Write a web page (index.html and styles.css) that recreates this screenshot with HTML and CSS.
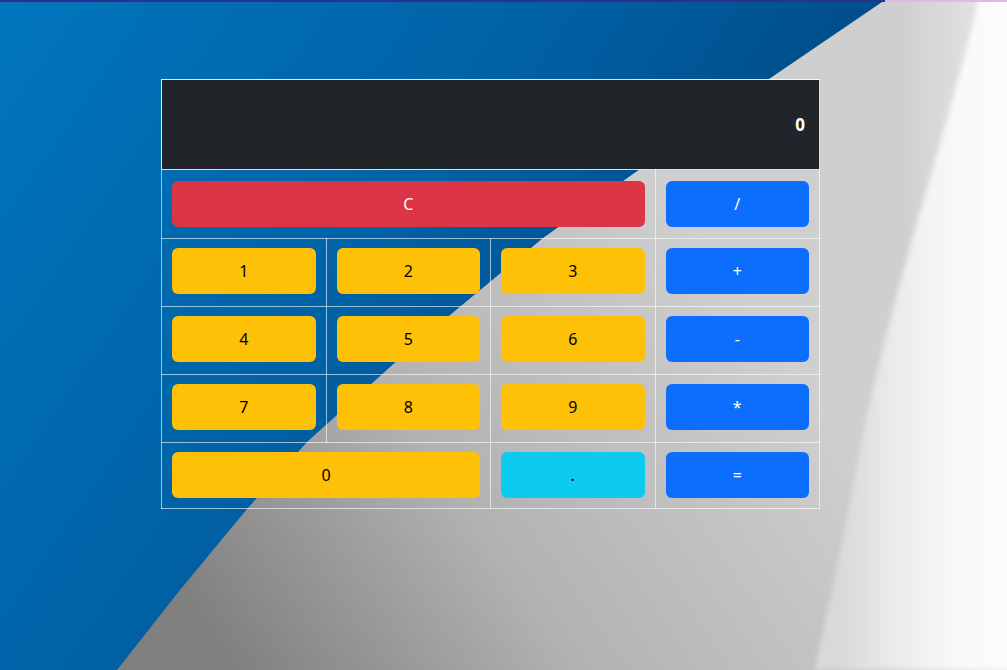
FILE: index.html
```html
<!DOCTYPE html>
<html lang="en">
<head>
<meta charset="utf-8">
<title>Calculator</title>
<link rel="stylesheet" href="styles.css">
</head>
<body>
<svg class="backdrop" viewBox="0 0 1007 670" preserveAspectRatio="none" aria-hidden="true">
  <defs>
    <linearGradient id="grayGrad" gradientUnits="userSpaceOnUse" x1="200" y1="620" x2="720" y2="260">
      <stop offset="0" stop-color="#808080"/>
      <stop offset="0.45" stop-color="#b2b2b2"/>
      <stop offset="1" stop-color="#cfcfcf"/>
    </linearGradient>
    <linearGradient id="blueGrad" gradientUnits="userSpaceOnUse" x1="0" y1="0" x2="620" y2="420">
      <stop offset="0" stop-color="#0076bd"/>
      <stop offset="0.6" stop-color="#0062a6"/>
      <stop offset="1" stop-color="#004c88"/>
    </linearGradient>
    <linearGradient id="whiteGrad" gradientUnits="userSpaceOnUse" x1="840" y1="0" x2="960" y2="0">
      <stop offset="0" stop-color="#d9d9d9"/>
      <stop offset="0.5" stop-color="#ececec"/>
      <stop offset="1" stop-color="#f7f7f7"/>
    </linearGradient>
    <linearGradient id="whiteRight" gradientUnits="userSpaceOnUse" x1="900" y1="0" x2="1007" y2="0">
      <stop offset="0" stop-color="#ffffff" stop-opacity="0"/>
      <stop offset="1" stop-color="#ffffff" stop-opacity="0.9"/>
    </linearGradient>
    <filter id="soft" x="-20%" y="-20%" width="140%" height="140%">
      <feGaussianBlur stdDeviation="2.5"/>
    </filter>
  </defs>
  <rect x="0" y="0" width="1007" height="670" fill="url(#grayGrad)"/>
  <path d="M978,0 C955,110 890,290 858,460 C842,550 825,620 815,670 L1030,670 L1030,-10 Z" fill="url(#whiteGrad)" filter="url(#soft)"/>
  <rect x="900" y="0" width="107" height="670" fill="url(#whiteRight)" opacity="0.6"/>
  <path d="M0,0 L885,0 L760,85 L640,169 L543,238 L420,340 L307,442 L247,509 L180,590 L117,670 L0,670 Z" fill="url(#blueGrad)"/>
  <rect x="0" y="0" width="885" height="2" fill="#2d2f8c"/>
  <rect x="885" y="0" width="122" height="2" fill="#e7b6e6"/>
</svg>

<main class="wrap">
  <table class="calc">
    <tbody>
      <tr>
        <td class="display" colspan="4">0</td>
      </tr>
      <tr class="row-first">
        <td colspan="3"><button class="btn btn-danger">C</button></td>
        <td><button class="btn btn-primary">/</button></td>
      </tr>
      <tr>
        <td><button class="btn btn-warning">1</button></td>
        <td><button class="btn btn-warning">2</button></td>
        <td><button class="btn btn-warning">3</button></td>
        <td><button class="btn btn-primary">+</button></td>
      </tr>
      <tr>
        <td><button class="btn btn-warning">4</button></td>
        <td><button class="btn btn-warning">5</button></td>
        <td><button class="btn btn-warning">6</button></td>
        <td><button class="btn btn-primary">-</button></td>
      </tr>
      <tr>
        <td><button class="btn btn-warning">7</button></td>
        <td><button class="btn btn-warning">8</button></td>
        <td><button class="btn btn-warning">9</button></td>
        <td><button class="btn btn-primary">*</button></td>
      </tr>
      <tr class="row-last">
        <td colspan="2"><button class="btn btn-warning">0</button></td>
        <td><button class="btn btn-info">.</button></td>
        <td><button class="btn btn-primary">=</button></td>
      </tr>
    </tbody>
  </table>
</main>
</body>
</html>
```

FILE: styles.css
```css
html, body {
  margin: 0;
  padding: 0;
}

body {
  width: 1007px;
  height: 670px;
  overflow: hidden;
  position: relative;
  font-family: "Noto Sans", "Open Sans", sans-serif;
  background: #c0c0c0;
}

.backdrop {
  position: absolute;
  left: 0;
  top: 0;
  width: 1007px;
  height: 670px;
  z-index: 0;
}

.wrap {
  position: relative;
  z-index: 1;
  padding: 79px 0 0 161px;
}

.calc {
  width: 659px;
  border-collapse: collapse;
  table-layout: fixed;
  border: 1px solid rgba(255, 255, 255, 0.75);
}

.calc td {
  border: 1px solid rgba(255, 255, 255, 0.6);
  padding: 9px 10px 12px;
  vertical-align: top;
}

.calc .row-first td {
  padding-top: 11px;
  padding-bottom: 11px;
}

.calc .row-last td {
  padding-top: 9px;
  padding-bottom: 10px;
}

.calc td.display {
  height: 90px;
  box-sizing: border-box;
  padding: 0 14px 0 0;
  background: #212529;
  color: #ffffff;
  text-align: right;
  vertical-align: middle;
  font-weight: 700;
  font-size: 17px;
  border-color: rgba(255, 255, 255, 0.85);
}

.btn {
  display: block;
  width: 100%;
  height: 46px;
  border: none;
  border-radius: 6px;
  font-family: "Noto Sans", "Open Sans", sans-serif;
  font-size: 16px;
  line-height: 1.5;
  padding: 0;
  cursor: pointer;
}

.btn-danger {
  background: #dc3545;
  color: #ffffff;
}

.btn-primary {
  background: #0d6efd;
  color: #ffffff;
}

.btn-warning {
  background: #ffc107;
  color: #000000;
}

.btn-info {
  background: #0dcaf0;
  color: #000000;
}
```
